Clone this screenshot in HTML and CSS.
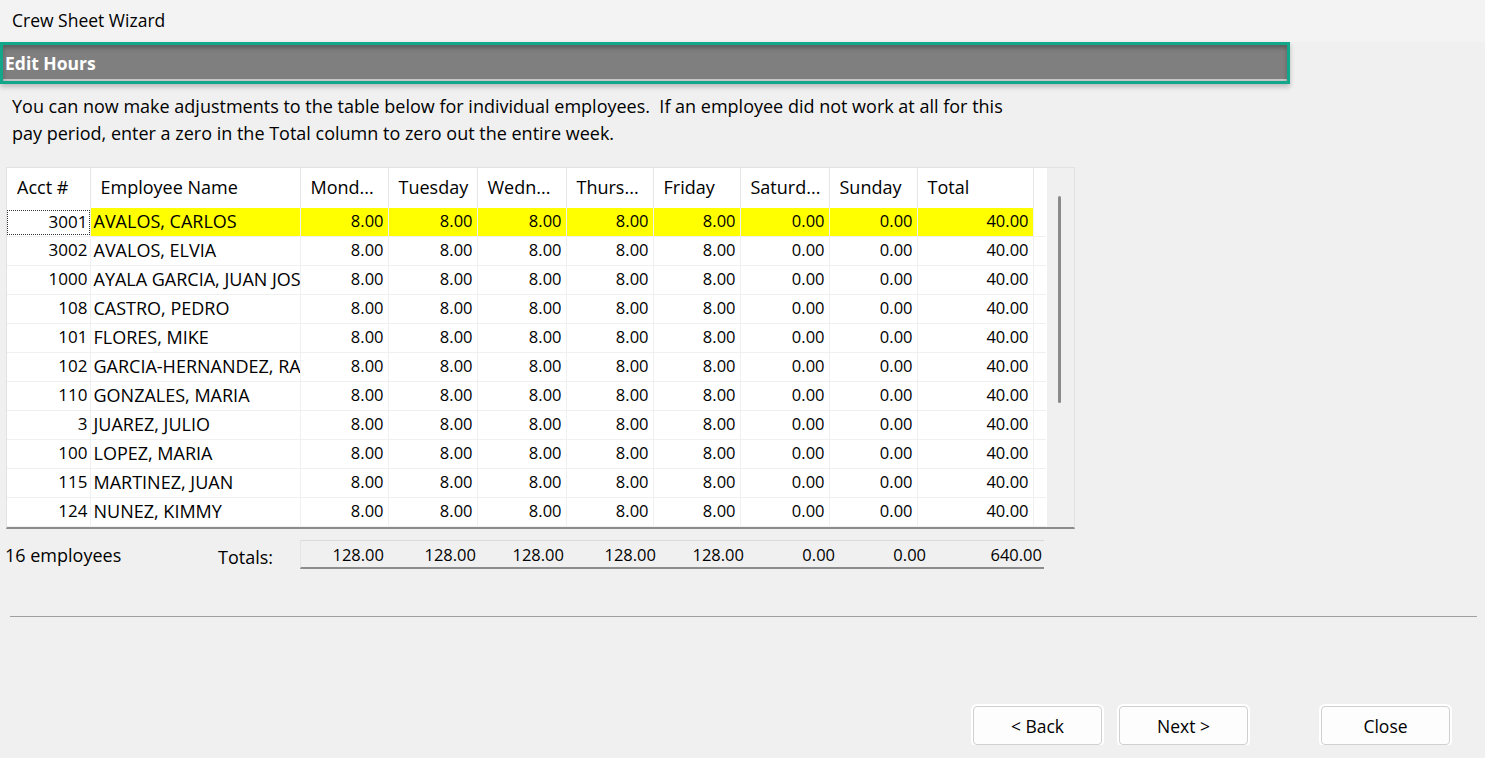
FILE: index.html
```html
<!DOCTYPE html>
<html lang="en">
<head>
    <meta charset="UTF-8">
    <title>Crew Sheet Wizard</title>
    <link rel="stylesheet" href="styles.css">
</head>
<body>
    <header class="titlebar">Crew Sheet Wizard</header>

    <div class="step-head">Edit Hours</div>

    <p class="intro">
        You can now make adjustments to the table below for individual employees.&nbsp; If an employee did not work at all for this<br>
        pay period, enter a zero in the Total column to zero out the entire week.
    </p>

    <section class="grid-box">
        <div class="grid-wrap">
            <table class="grid">
                <colgroup>
                    <col class="c-acct">
                    <col class="c-name">
                    <col class="c-mon">
                    <col class="c-tue">
                    <col class="c-wed">
                    <col class="c-thu">
                    <col class="c-fri">
                    <col class="c-sat">
                    <col class="c-sun">
                    <col class="c-total">
                    <col class="c-pad">
                </colgroup>
                <thead>
                    <tr>
                        <th>Acct #</th>
                        <th>Employee Name</th>
                        <th>Mond...</th>
                        <th>Tuesday</th>
                        <th>Wedn...</th>
                        <th>Thurs...</th>
                        <th>Friday</th>
                        <th>Saturd...</th>
                        <th>Sunday</th>
                        <th>Total</th>
                        <th></th>
                    </tr>
                </thead>
                <tbody id="rows"></tbody>
            </table>
        </div>
        <div class="vscroll"><div class="thumb"></div></div>
    </section>

    <section class="totals-row">
        <div class="count">16 employees</div>
        <div class="totals-label">Totals:</div>
        <div class="totals-box">
            <span class="t-mon">128.00</span>
            <span class="t-tue">128.00</span>
            <span class="t-wed">128.00</span>
            <span class="t-thu">128.00</span>
            <span class="t-fri">128.00</span>
            <span class="t-sat">0.00</span>
            <span class="t-sun">0.00</span>
            <span class="t-total">640.00</span>
        </div>
    </section>

    <hr class="divider">

    <footer class="buttons">
        <button class="btn">&lt; Back</button>
        <button class="btn">Next &gt;</button>
        <button class="btn btn-close">Close</button>
    </footer>

    <script>
        const employees = [
            ["3001", "AVALOS, CARLOS"],
            ["3002", "AVALOS, ELVIA"],
            ["1000", "AYALA GARCIA, JUAN JOSE"],
            ["108", "CASTRO, PEDRO"],
            ["101", "FLORES, MIKE"],
            ["102", "GARCIA-HERNANDEZ, RAUL"],
            ["110", "GONZALES, MARIA"],
            ["3", "JUAREZ, JULIO"],
            ["100", "LOPEZ, MARIA"],
            ["115", "MARTINEZ, JUAN"],
            ["124", "NUNEZ, KIMMY"]
        ];

        const hours = ["8.00", "8.00", "8.00", "8.00", "8.00", "0.00", "0.00", "40.00"];

        const tbody = document.getElementById("rows");
        employees.forEach(([acct, name], i) => {
            const tr = document.createElement("tr");
            if (i === 0) tr.className = "current";
            let html = `<td class="acct"><span>${acct}</span></td><td class="name">${name}</td>`;
            hours.forEach(h => { html += `<td class="num">${h}</td>`; });
            html += `<td class="pad"></td>`;
            tr.innerHTML = html;
            tbody.appendChild(tr);
        });
    </script>
</body>
</html>
```

FILE: styles.css
```css
body {
    margin: 0;
    background-color: #f0f0f0;
    font-family: "Open Sans", "Noto Sans", sans-serif;
    font-size: 18px;
    color: #000;
}

.titlebar {
    height: 42px;
    line-height: 40px;
    padding-left: 12px;
    font-size: 17.5px;
    background-color: #f3f3f3;
}

.step-head {
    box-sizing: border-box;
    width: 1290px;
    height: 42px;
    padding-left: 2px;
    line-height: 36px;
    border: 3px solid #12a68a;
    background-color: #7f7f7f;
    box-shadow: inset 0 3px 4px rgba(0, 0, 0, 0.28), inset 0 -2px 0 #c6c6c6, 0 3px 5px rgba(0, 0, 0, 0.22);
    color: #fff;
    font-size: 17.5px;
    font-weight: bold;
}

.intro {
    margin: 0;
    padding: 9px 0 0 12px;
    line-height: 27px;
}

/* grid */
.grid-box {
    display: flex;
    width: 1067px;
    height: 359px;
    margin: 20px 0 0 6px;
    border: 1px solid #e2e2e2;
    border-bottom: 2px solid #8c8c8c;
    background-color: #f0f0f0;
}

.grid-wrap {
    width: 1040px;
    overflow: hidden;
    background-color: #fff;
}

.grid {
    border-collapse: collapse;
    table-layout: fixed;
    width: 1039px;
}

.c-acct { width: 83px; }
.c-name { width: 210px; }
.c-mon { width: 88px; }
.c-tue { width: 89px; }
.c-wed { width: 89px; }
.c-thu { width: 87px; }
.c-fri { width: 87px; }
.c-sat { width: 89px; }
.c-sun { width: 88px; }
.c-total { width: 116px; }
.c-pad { width: 13px; }

.grid th {
    height: 37px;
    padding: 0 0 3px 10px;
    text-align: left;
    font-weight: normal;
    white-space: nowrap;
    overflow: hidden;
    border-right: 1px solid #e6e6e6;
}

.grid th:last-child {
    border-right: none;
}

.grid td {
    height: 25px;
    padding: 0 0 3px 0;
    white-space: nowrap;
    overflow: hidden;
    border-right: 1px solid #f0f0f0;
    border-bottom: 1px solid #f0f0f0;
}

.grid td.acct {
    text-align: right;
    padding: 0;
    font-size: 17px;
}

.grid td.acct span {
    display: block;
    height: 25px;
    padding: 0 2px 3px 0;
    line-height: 25px;
}

.grid td.name {
    padding-left: 3px;
    text-overflow: clip;
}

.grid td.num {
    text-align: right;
    padding-right: 4px;
    font-size: 16.5px;
}

.grid td.pad {
    border-right: none;
}

.grid tr.current td {
    background-color: #ffff00;
}

.grid tr.current td.acct,
.grid tr.current td.pad {
    background-color: #fff;
}

.grid tr.current td.acct span {
    margin: 1px 0 1px 0;
    height: 24px;
    padding-bottom: 1px;
    line-height: 24px;
    outline: 1px dotted #333;
    outline-offset: -1px;
}

.vscroll {
    position: relative;
    width: 27px;
}

.vscroll .thumb {
    position: absolute;
    left: 11px;
    top: 28px;
    width: 3px;
    height: 207px;
    border-radius: 2px;
    background-color: #8a8a8a;
}

/* totals */
.totals-row {
    display: flex;
    align-items: center;
    margin-top: 11px;
}

.count {
    width: 213px;
    padding-left: 5px;
}

.totals-label {
    width: 82px;
    padding-top: 5px;
}

.totals-box {
    display: flex;
    box-sizing: border-box;
    width: 744px;
    height: 29px;
    line-height: 27px;
    border-top: 1px solid #dadada;
    border-left: 1px solid #e4e4e4;
    border-bottom: 2px solid #8c8c8c;
    font-size: 16.5px;
}

.totals-box span {
    text-align: right;
}

.t-mon { width: 83px; }
.t-tue { width: 92px; }
.t-wed { width: 88px; }
.t-thu { width: 92px; }
.t-fri { width: 88px; }
.t-sat { width: 91px; }
.t-sun { width: 91px; }
.t-total { width: 116px; }

.divider {
    width: 1467px;
    margin: 47px 0 0 10px;
    border: none;
    border-top: 1px solid #a0a0a0;
}

/* buttons */
.buttons {
    display: flex;
    justify-content: flex-end;
    gap: 17px;
    margin-top: 89px;
    padding-right: 35px;
}

.btn {
    width: 129px;
    height: 39px;
    background-color: #fdfdfd;
    border: 1px solid #d0d0d0;
    border-radius: 4px;
    box-shadow: 0 0 0 2px #fff;
    font-family: inherit;
    font-size: 17.5px;
    color: #000;
}

.btn-close {
    margin-left: 56px;
}
```
